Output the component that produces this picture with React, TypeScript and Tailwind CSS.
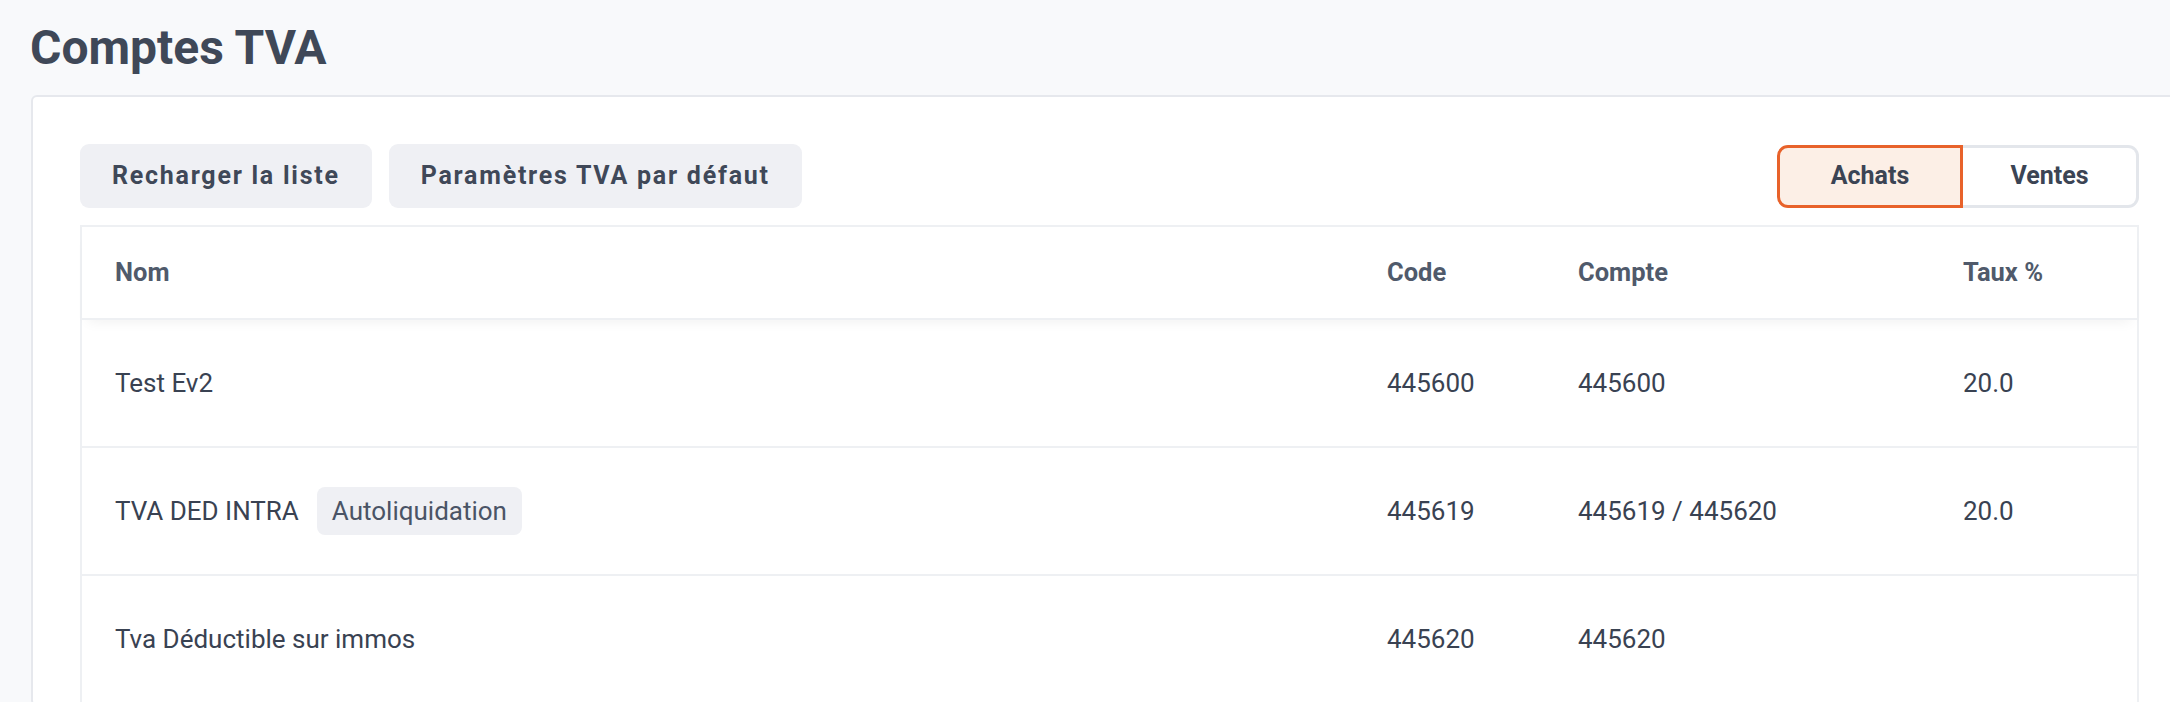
import React from 'react';

type Row = {
  name: string;
  badge?: string;
  code: string;
  compte: string;
  taux: string;
};

const rows: Row[] = [
  { name: 'Test Ev2', code: '445600', compte: '445600', taux: '20.0' },
  { name: 'TVA DED INTRA', badge: 'Autoliquidation', code: '445619', compte: '445619 / 445620', taux: '20.0' },
  { name: 'Tva Déductible sur immos', code: '445620', compte: '445620', taux: '' },
];

const cols = 'grid grid-cols-[1272px_191px_385px_1fr]';

const App: React.FC = () => {
  return (
    <div
      className="w-[2170px] h-[702px] overflow-hidden bg-[#f8f9fb] pl-[31px] pt-[20px]"
      style={{ fontFamily: 'Roboto, "Liberation Sans", sans-serif' }}
    >
      <h1 className="text-[48px] leading-[56px] font-bold text-[#3f4858] mb-[19px] -ml-[1px]">Comptes TVA</h1>

      <div className="w-[2157px] shrink-0 bg-white border-2 border-[#e6e8ed] rounded-[6px] pt-[47px] pl-[47px] pr-[47px]">
        {/* toolbar */}
        <div className="flex items-center justify-between mb-[17px]">
          <div className="flex gap-[17px]">
            <button className="h-[64px] px-[32px] rounded-[9px] bg-[#eff0f4] text-[25px] font-bold tracking-[0.07em] text-[#3f4858]">
              Recharger la liste
            </button>
            <button className="h-[64px] px-[32px] rounded-[9px] bg-[#eff0f4] text-[25px] font-bold tracking-[0.07em] text-[#3f4858]">
              Paramètres TVA par défaut
            </button>
          </div>
          <div className="flex h-[63px]">
            <button className="w-[186px] h-full rounded-l-[11px] border-[3px] border-[#e8622a] bg-[#fcefe6] text-[25px] font-bold text-[#3b4454]">
              Achats
            </button>
            <button className="w-[176px] h-full rounded-r-[11px] border-[3px] border-l-0 border-[#e3e6eb] bg-white text-[25px] font-bold text-[#3b4454]">
              Ventes
            </button>
          </div>
        </div>

        {/* table */}
        <div className="border-2 border-b-0 border-[#eef0f3]">
          <div className={`${cols} h-[93px] items-center border-b-2 border-[#eef0f3] shadow-[0_8px_12px_-6px_rgba(0,0,0,0.06)] relative text-[25.5px] font-bold text-[#505a6b]`}>
            <div className="pl-[33px]">Nom</div>
            <div className="pl-[33px]">Code</div>
            <div className="pl-[33px]">Compte</div>
            <div className="pl-[33px]">Taux %</div>
          </div>
          {rows.map((r) => (
            <div
              key={r.name}
              className={`${cols} h-[128px] items-center border-b-2 border-[#eef0f3] text-[26px] text-[#394252]`}
            >
              <div className="pl-[33px] flex items-center gap-[18px]">
                <span>{r.name}</span>
                {r.badge && (
                  <span className="h-[48px] px-[15px] flex items-center rounded-[8px] bg-[#eff0f4] text-[#4a5466]">
                    {r.badge}
                  </span>
                )}
              </div>
              <div className="pl-[33px]">{r.code}</div>
              <div className="pl-[33px]">{r.compte}</div>
              <div className="pl-[33px]">{r.taux}</div>
            </div>
          ))}
        </div>
      </div>
    </div>
  );
};

export default App;
